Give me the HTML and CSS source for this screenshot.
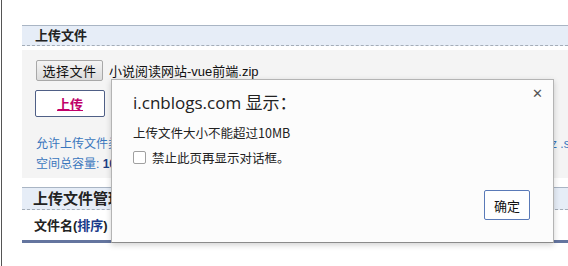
FILE: index.html
```html
<!DOCTYPE html>
<html lang="zh-CN">
    <head>
        <meta charset="UTF-8">
        <title>上传文件</title>
        <link rel="stylesheet" href="styles.css">
    </head>
    <body>
        <div id="page">
            <!-- 上传区域 -->
            <div class="panel">
                <div class="panel-head">上传文件</div>
                <div class="panel-body">
                    <div class="file-row">
                        <button class="file-btn">选择文件</button>
                        <span class="file-name">小说阅读网站-vue前端.zip</span>
                    </div>
                    <div class="upload-row">
                        <button class="upload-btn">上传</button>
                    </div>
                    <p class="tip types"><span class="types-list">允许上传文件类型: .jpg .gif .png .bmp .doc .docx .txt .rar .zip</span><span>.gz .swf .xls</span></p>
                    <p class="tip">空间总容量: <b>10</b></p>
                </div>
            </div>

            <!-- 文件管理 -->
            <div class="panel manage">
                <div class="panel-head big">上传文件管理</div>
                <div class="file-head">文件名(<a href="#">排序</a>)</div>
                <div class="file-bar"></div>
            </div>
        </div>

        <!-- 浏览器的提示框 -->
        <div id="alert-box">
            <span class="close">✕</span>
            <div class="alert-title">i.cnblogs.com 显示：</div>
            <div class="alert-msg">上传文件大小不能超过10MB</div>
            <label class="alert-check"><span class="box"></span>禁止此页再显示对话框。</label>
            <div class="alert-foot">
                <button class="ok-btn">确定</button>
            </div>
        </div>
    </body>
</html>
```

FILE: styles.css
```css
* {
    margin: 0;
    padding: 0;
    box-sizing: border-box;
}

body {
    font: 13px "Liberation Sans", "Noto Sans CJK SC", sans-serif;
    color: #222;
    background-color: white;
    overflow: hidden;
}

#page {
    margin-left: 1px;
    height: 266px;
    padding: 25px 0 0 20px;
    border-left: 1px solid #555;
}

.panel-head {
    height: 21px;
    padding-left: 13px;
    line-height: 19px;
    font-weight: bold;
    font-size: 13px;
    background-color: #e6edf7;
    border-top: 1px solid #a9b5c4;
    border-bottom: 1px dashed #a4adb8;
}

.panel-head.big {
    height: 23px;
    padding-left: 11px;
    line-height: 21px;
    font-size: 15px;
}

.panel-body {
    margin-top: 4px;
    height: 128px;
    padding: 10px 0 0 14px;
    background-color: #f4f4f4;
    white-space: nowrap;
    overflow: hidden;
}

.file-row {
    display: flex;
    align-items: center;
    gap: 6px;
    height: 21px;
}

.file-btn {
    width: 67px;
    height: 21px;
    font: 13px "Noto Sans CJK SC", sans-serif;
    letter-spacing: 0.5px;
    color: #111;
    background: linear-gradient(#f4f4f4, #dcdcdc);
    border: 1px solid #a8a8a8;
    border-radius: 2px;
}

.file-name {
    font-size: 13px;
    color: #111;
}

.upload-row {
    margin-top: 9px;
    margin-left: -1px;
}

.upload-btn {
    width: 70px;
    height: 27px;
    font: bold 13px "Noto Sans CJK SC", sans-serif;
    color: #c0006a;
    text-decoration: underline;
    background-color: white;
    border: 1px solid #4f5f86;
    border-radius: 2px;
}

.tip {
    margin-top: 0;
    height: 20px;
    line-height: 20px;
    font-size: 12px;
    color: #3a76bd;
}

.upload-row + .tip {
    margin-top: 17px;
}

.types {
    display: flex;
}

.types-list {
    flex-shrink: 0;
    width: 505px;
    overflow: hidden;
}

.tip b {
    color: #1d3f84;
}

.manage {
    margin-top: 9px;
}

.file-head {
    height: 30px;
    padding-left: 12px;
    line-height: 32px;
    font-weight: bold;
}

.file-head a {
    color: #1a3a8a;
    text-decoration: none;
}

.file-bar {
    height: 3px;
    background-color: #64759f;
}

/* 提示框 */
#alert-box {
    position: absolute;
    top: 79px;
    left: 111px;
    width: 443px;
    height: 164px;
    padding: 12px 0 0 21px;
    background-color: #fcfcfc;
    border: 1px solid #b4b4b4;
    border-bottom-color: #8a8a8a;
    box-shadow: 0 2px 6px rgba(0, 0, 0, 0.18);
    font-family: "Noto Sans CJK SC", sans-serif;
}

.close {
    position: absolute;
    top: 6px;
    right: 10px;
    font: bold 13px "DejaVu Sans", sans-serif;
    color: #555;
}

.alert-title {
    font: 17px "Open Sans", "Noto Sans CJK SC", sans-serif;
    color: #222;
    height: 22px;
    line-height: 22px;
}

.alert-msg {
    margin-top: 10px;
    font-size: 12.5px;
    line-height: 18px;
}

.alert-check {
    display: flex;
    align-items: center;
    gap: 6px;
    margin-top: 6px;
    font-size: 12.5px;
}

.alert-check .box {
    width: 13px;
    height: 13px;
    background-color: white;
    border: 1px solid #a0a0a0;
    border-radius: 2px;
}

.alert-foot {
    display: flex;
    justify-content: flex-end;
    margin-top: 23px;
    padding-right: 23px;
}

.ok-btn {
    width: 46px;
    height: 30px;
    font: 13px "Noto Sans CJK SC", sans-serif;
    color: #111;
    background-color: white;
    border: 1px solid #5a7ab8;
    border-radius: 2px;
}
```
